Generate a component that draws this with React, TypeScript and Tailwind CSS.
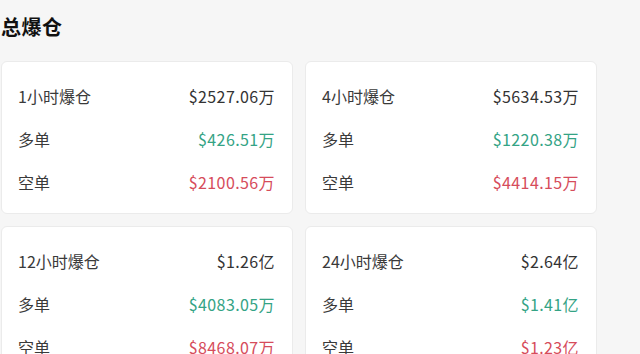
import React from "react";

type Card = { title: string; total: string; long: string; short: string };

const cards: Card[] = [
  { title: "1小时爆仓", total: "$2527.06万", long: "$426.51万", short: "$2100.56万" },
  { title: "4小时爆仓", total: "$5634.53万", long: "$1220.38万", short: "$4414.15万" },
  { title: "12小时爆仓", total: "$1.26亿", long: "$4083.05万", short: "$8468.07万" },
  { title: "24小时爆仓", total: "$2.64亿", long: "$1.41亿", short: "$1.23亿" },
];

function Row({ label, value, color }: { label: string; value: string; color: string }) {
  return (
    <div className="flex h-[43px] items-center justify-between">
      <span className="text-[16px] text-[#3a3a3a]">{label}</span>
      <span className={`text-[16px] tracking-[0.4px] ${color}`}>{value}</span>
    </div>
  );
}

export default function App() {
  return (
    <div
      className="h-[354px] w-[640px] overflow-hidden bg-[#f6f6f6]"
      style={{ fontFamily: '"Noto Sans CJK SC", "Noto Sans", sans-serif' }}
    >
      <div className="pt-[12px] pl-[1px]">
        <h1 className="h-[29px] text-[20px] leading-[29px] font-bold tracking-[0.5px] text-[#111]">总爆仓</h1>
        <div className="mt-[20px] grid w-[596px] grid-cols-2 gap-x-[12px] gap-y-[12px]">
          {cards.map((c) => (
            <div
              key={c.title}
              className="h-[153px] rounded-[6px] border border-[#ebebeb] bg-white pt-[12px] pr-[17px] pl-[16px]"
            >
              <Row label={c.title} value={c.total} color="text-[#333]" />
              <Row label="多单" value={c.long} color="text-[#34a385]" />
              <Row label="空单" value={c.short} color="text-[#d64c5b]" />
            </div>
          ))}
        </div>
      </div>
    </div>
  );
}
